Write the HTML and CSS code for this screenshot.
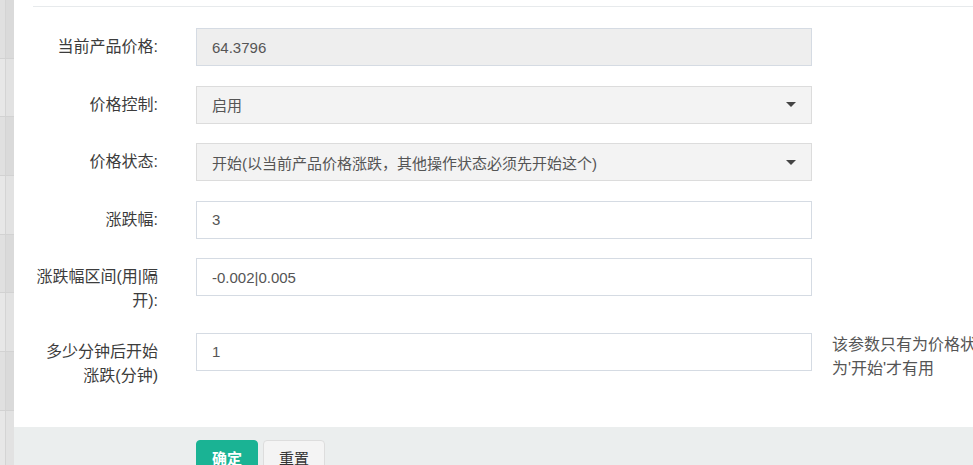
FILE: index.html
```html
<!DOCTYPE html>
<html lang="zh-CN">
<head>
<meta charset="utf-8">
<title>价格设置</title>
<link rel="stylesheet" href="styles.css">
</head>
<body>
<div class="bg-table">
  <div class="bg-row"><span class="c1"></span><span class="c2"></span></div>
  <div class="bg-row"><span class="c1"></span><span class="c2"></span></div>
  <div class="bg-row"><span class="c1"></span><span class="c2"></span></div>
  <div class="bg-row"><span class="c1"></span><span class="c2"></span></div>
  <div class="bg-row"><span class="c1"></span><span class="c2"></span></div>
  <div class="bg-row"><span class="c1"></span><span class="c2"></span></div>
  <div class="bg-row"><span class="c1"></span><span class="c2"></span></div>
  <div class="bg-row"><span class="c1"></span><span class="c2"></span></div>
</div>
<div class="modal">
  <div class="modal-top"></div>
  <form class="form">
    <div class="form-group">
      <label class="label">当前产品价格:</label>
      <input class="control readonly" type="text" value="64.3796" readonly>
    </div>
    <div class="form-group">
      <label class="label">价格控制:</label>
      <div class="control select"><span>启用</span><span class="caret"></span></div>
    </div>
    <div class="form-group">
      <label class="label">价格状态:</label>
      <div class="control select"><span>开始(以当前产品价格涨跌，其他操作状态必须先开始这个)</span><span class="caret"></span></div>
    </div>
    <div class="form-group">
      <label class="label">涨跌幅:</label>
      <input class="control" type="text" value="3">
    </div>
    <div class="form-group">
      <label class="label">涨跌幅区间(用|隔开):</label>
      <input class="control" type="text" value="-0.002|0.005">
    </div>
    <div class="form-group">
      <label class="label">多少分钟后开始涨跌(分钟)</label>
      <input class="control" type="text" value="1">
      <div class="help">该参数只有为价格状态为'开始'才有用</div>
    </div>
  </form>
  <div class="footer">
    <button class="btn btn-primary" type="button">确定</button>
    <button class="btn btn-default" type="button">重置</button>
  </div>
</div>
</body>
</html>
```
FILE: styles.css
```css
html, body {
  margin: 0;
  padding: 0;
}
body {
  display: flex;
  align-items: flex-start;
  height: 465px;
  overflow: hidden;
  background: #fff;
  font-family: "Liberation Sans", "Noto Sans CJK SC", sans-serif;
  color: #3a3a3a;
}
.bg-table {
  flex: none;
  width: 14px;
  height: 465px;
  overflow: hidden;
  display: flex;
  flex-direction: column;
  background: #dedede;
}
.bg-row {
  flex: none;
  height: 58.7px;
  display: flex;
  box-sizing: border-box;
  border-bottom: 1px solid #d2d2d2;
}
.bg-row .c1 {
  width: 5px;
  border-right: 1px solid #d4d4d4;
  background: #e0e0e0;
}
.bg-row .c2 {
  flex: 1;
  background: #dadada;
}
.bg-row:nth-child(even) .c1 { background: #e7e7e7; }
.bg-row:nth-child(even) .c2 { background: #e2e2e2; }

.modal {
  flex: none;
  width: 1100px;
  height: 480px;
  display: flex;
  flex-direction: column;
  background: #fff;
}
.modal-top {
  flex: none;
  margin-left: 19px;
  height: 6px;
  border-bottom: 1px solid #e7eaec;
}
.form {
  flex: none;
  margin: 0;
  padding: 21px 0 20px 19px;
}
.form-group {
  display: flex;
  align-items: flex-start;
  margin-bottom: 19.5px;
}
.label {
  flex: none;
  width: 125px;
  margin-right: 38px;
  padding-top: 7px;
  font-size: 16px;
  line-height: 24px;
  text-align: right;
  color: #3c3c3c;
}
.control {
  flex: none;
  width: 616px;
  height: 38px;
  box-sizing: border-box;
  margin: 0;
  padding: 0 15px;
  border: 1px solid #d5dbe3;
  border-radius: 0;
  background: #fff;
  font-family: "Liberation Sans", "Noto Sans CJK SC", sans-serif;
  font-size: 15px;
  color: #555;
  outline: none;
}
.control.readonly {
  background: #eeeeee;
}
.select {
  display: flex;
  align-items: center;
  justify-content: space-between;
  background: #f3f3f3;
  border-color: #dcdcdc;
}
.caret {
  width: 0;
  height: 0;
  border-left: 5px solid transparent;
  border-right: 5px solid transparent;
  border-top: 5px solid #444;
}
.help {
  flex: none;
  width: 165px;
  margin-left: 20px;
  font-size: 16px;
  line-height: 24px;
  color: #555;
}
.footer {
  flex: 1;
  display: flex;
  align-items: flex-start;
  gap: 5px;
  padding: 13px 0 0 182px;
  background: #ebeeee;
}
.btn {
  flex: none;
  width: 62px;
  height: 38px;
  box-sizing: border-box;
  margin: 0;
  padding: 0;
  border-radius: 4px;
  font-family: "Liberation Sans", "Noto Sans CJK SC", sans-serif;
  font-size: 15px;
  line-height: 36px;
  text-align: center;
  cursor: pointer;
}
.btn-primary {
  background: #1ab394;
  border: 1px solid #1ab394;
  color: #fff;
  font-weight: bold;
}
.btn-default {
  background: #f4f4f4;
  border: 1px solid #dddddd;
  color: #333;
}
```
